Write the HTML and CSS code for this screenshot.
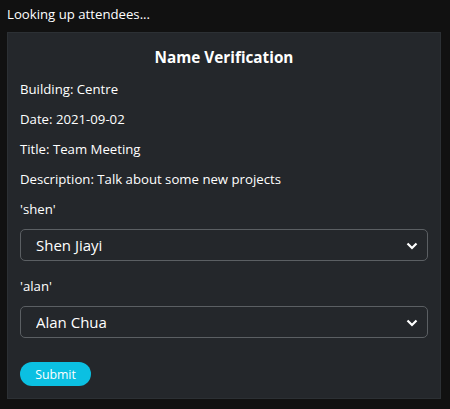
FILE: index.html
```html
<!DOCTYPE html>
<html>
<head>
<meta charset="utf-8">
<link rel="stylesheet" href="styles.css">
</head>
<body>
<p class="status">Looking up attendees...</p>
<div class="card">
  <h2 class="card-title">Name Verification</h2>
  <p class="row">Building: Centre</p>
  <p class="row">Date: 2021-09-02</p>
  <p class="row">Title: Team Meeting</p>
  <p class="row">Description: Talk about some new projects</p>
  <p class="row">'shen'</p>
  <div class="select-wrap">
    <select class="select"><option>Shen Jiayi</option></select>
    <svg class="chev" width="12" height="8" viewBox="0 0 12 8"><path d="M1.5 1.5 L6 6 L10.5 1.5" fill="none" stroke="#fff" stroke-width="2.2"/></svg>
  </div>
  <p class="row">'alan'</p>
  <div class="select-wrap">
    <select class="select"><option>Alan Chua</option></select>
    <svg class="chev" width="12" height="8" viewBox="0 0 12 8"><path d="M1.5 1.5 L6 6 L10.5 1.5" fill="none" stroke="#fff" stroke-width="2.2"/></svg>
  </div>
  <button class="btn">Submit</button>
</div>
</body>
</html>
```
FILE: styles.css
```css
html, body { margin: 0; padding: 0; background: #111111; }
body {
  font-family: "Open Sans", "Noto Sans", sans-serif;
  color: #ffffff;
  padding: 0 7px;
  font-size: 13.2px;
}
.status { margin: 0; padding-top: 4px; height: 28px; line-height: 20px; }
.card {
  width: 434px;
  box-sizing: border-box;
  background: #24272b;
  border: 1px solid #2c3034;
  padding: 11px 12px 12px 12px;
  height: 367px;
}
.card-title {
  margin: 0 0 9px 0;
  text-align: center;
  font-size: 15.3px;
  font-weight: 700;
  line-height: 26px;
}
.row { margin: 0 0 10px 0; line-height: 20px; }
.select-wrap { position: relative; margin-bottom: 15px; }
.select {
  appearance: none;
  -webkit-appearance: none;
  width: 100%;
  height: 32px;
  box-sizing: border-box;
  background: #24272b;
  color: #fff;
  border: 1px solid #5b5f63;
  border-radius: 5px;
  padding: 0 15px;
  font-family: inherit;
  font-size: 15px;
}
.chev { position: absolute; right: 10px; top: 13px; }
.btn {
  margin-top: 24px;
  display: block;
  width: 71px;
  height: 24px;
  border: none;
  border-radius: 12px;
  background: #0bc0e2;
  color: #fff;
  font-family: inherit;
  font-size: 12.3px;
  padding: 0;
}
```
